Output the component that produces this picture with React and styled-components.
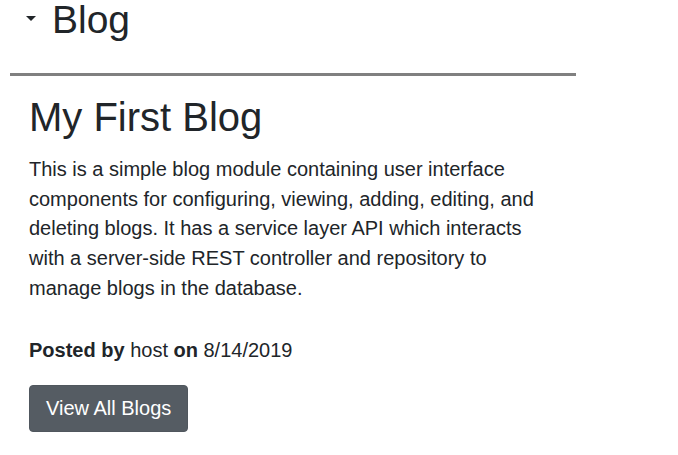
import React from 'react'
import styled, { createGlobalStyle } from 'styled-components'

const GlobalStyle = createGlobalStyle`
	body {
		margin: 0;
		background: #fff;
		color: #212529;
		font-family: "Liberation Sans", Arial, sans-serif;
	}
`

function App() {
	return (
		<Page>
			<GlobalStyle />
			<Header>
				<Caret />
				<HeaderTitle>Blog</HeaderTitle>
			</Header>
			<Divider />
			<Content>
				<Title>My First Blog</Title>
				<Summary>
					This is a simple blog module containing user interface components for
					configuring, viewing, adding, editing, and deleting blogs. It has a
					service layer API which interacts with a server-side REST controller and
					repository to manage blogs in the database.
				</Summary>
				<Meta>
					<b>Posted by</b> host <b>on</b> 8/14/2019
				</Meta>
				<Button>View All Blogs</Button>
			</Content>
		</Page>
	)
}

const Page = styled.div`
	width: 566px;
	padding-left: 10px;
`
const Header = styled.div`
	display: flex;
	align-items: flex-start;
	padding-left: 16px;
	height: 40px;
`
const Caret = styled.span`
	width: 0;
	height: 0;
	border-top: 5px solid #212529;
	border-left: 5px solid transparent;
	border-right: 5px solid transparent;
	margin: 16px 16px 0 0;
`
const HeaderTitle = styled.span`
	font-size: 39px;
	line-height: 40px;
`
const Divider = styled.hr`
	margin: 33px 0 0;
	border: 0;
	border-top: 3px solid #808080;
`
const Content = styled.div`
	padding-left: 19px;
`
const Title = styled.h1`
	font-size: 40px;
	font-weight: 400;
	line-height: 48px;
	margin: 17px 0 0;
`
const Summary = styled.p`
	width: 515px;
	font-size: 20px;
	line-height: 29.7px;
	margin: 14px 0 0;
`
const Meta = styled.p`
	font-size: 20px;
	line-height: 30px;
	margin: 31px 0 0;
`
const Button = styled.button`
	display: block;
	margin-top: 20px;
	background: #555c63;
	color: #fff;
	border: 1px solid #50575e;
	border-radius: 4px;
	font-family: inherit;
	font-size: 20px;
	line-height: 30px;
	padding: 0 16px;
	height: 47px;
`

export default App
